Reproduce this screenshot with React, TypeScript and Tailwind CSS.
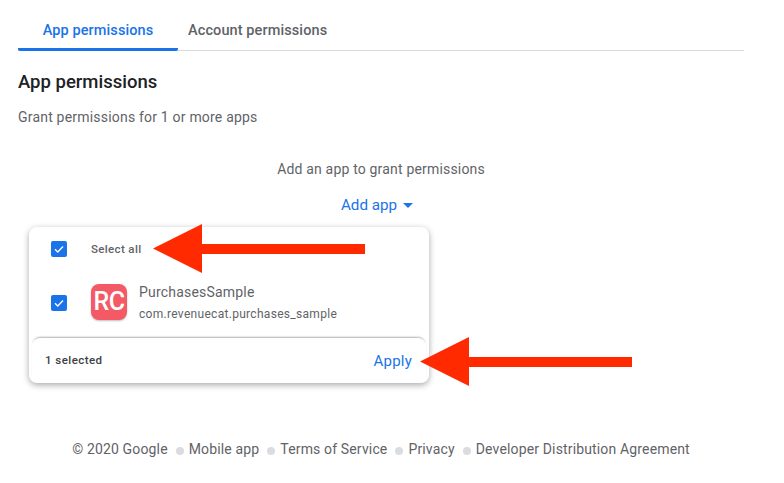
const Box = () => (
  <span className="flex h-4 w-4 items-center justify-center rounded-[2px] bg-[#1a73e8]">
    <svg className="h-3 w-3" viewBox="0 0 24 24" fill="none" stroke="white" strokeWidth="2.6" aria-hidden>
      <path d="M4 12.5l5.5 5.5L20 7" />
    </svg>
  </span>
);

const Arrow = ({ className }: { className: string }) => (
  <svg className={className} width="212" height="49" viewBox="0 0 212 49" aria-hidden>
    <path d="M0 24.5L49 0V20H212V30H49V49Z" fill="#ff2a00" />
  </svg>
);

const Dot = () => <span className="mt-[8px] h-2 w-2 rounded-full bg-[#dadce0]" />;

const App = () => (
  <div className="relative h-[483px] w-[784px] overflow-hidden bg-white font-['Roboto',sans-serif] text-[#5f6368]">
    <div className="pl-[18px] pr-[40px]">
      <div className="flex h-[51px] border-b border-[#dadce0] pt-[21px] text-[14.5px] font-medium tracking-[0.1px]">
        <div className="-mb-px h-[30px] w-[160px] rounded-b-[2px] border-b-[3px] border-[#1a73e8] text-center leading-[20px] text-[#1a73e8]">
          App permissions
        </div>
        <div className="pl-[10px] leading-[20px]">Account permissions</div>
      </div>
      <h2 className="mt-[20px] text-[18.5px] font-medium leading-[22px] text-[#202124]">App permissions</h2>
      <p className="mt-[14px] text-[14px] leading-[20px] tracking-[0.2px]">Grant permissions for 1 or more apps</p>
      <p className="mt-[32px] text-center text-[14px] leading-[20px] tracking-[0.18px]">
        Add an app to grant permissions
      </p>
      <div className="mt-[16px] flex items-center justify-center gap-[6px] pr-[8px] text-[15.2px] leading-[20px] text-[#1a73e8]">
        Add app
        <span className="mt-[1px] h-0 w-0 border-x-[5px] border-t-[5px] border-x-transparent border-t-[#1a73e8]" />
      </div>
      <div className="ml-[11px] mt-[12px] h-[156px] w-[400px] rounded-lg bg-white shadow-[0_2px_6px_rgba(60,64,67,0.45)]">
        <div className="flex h-[44px] items-center pl-[22px]">
          <Box />
          <span className="ml-[24px] pt-[1px] text-[11.5px] font-medium tracking-[0.35px]">Select all</span>
        </div>
        <div className="flex h-[67px] items-center pb-[5px] pl-[22px]">
          <span className="mt-[1px]">
            <Box />
          </span>
          <div className="ml-[24px] flex h-9 w-9 items-center justify-center rounded-lg bg-[#f35a66] text-[25px] font-medium tracking-[-0.5px] text-white shadow-[0_1px_2px_rgba(0,0,0,0.25)]">
            RC
          </div>
          <div className="ml-[12px] pb-[1px]">
            <div className="text-[14px] leading-[20px] tracking-[0.2px]">PurchasesSample</div>
            <div className="mt-[4px] text-[12px] leading-[16px] tracking-[0.3px]">com.revenuecat.purchases_sample</div>
          </div>
        </div>
        <div className="mx-[3px] flex h-[45px] items-center justify-between rounded-t-lg pl-[13px] pr-[14px] pt-[1px] shadow-[0_-2px_2px_-1px_rgba(60,64,67,0.4)]">
          <span className="text-[11.5px] font-medium tracking-[0.45px] text-[#3c4043]">1 selected</span>
          <span className="text-[15px] tracking-[0.2px] text-[#1a73e8]">Apply</span>
        </div>
      </div>
      <div className="mt-[56px] flex justify-center gap-[5px] text-[14px] leading-[20px] tracking-[0.15px]">
        <span className="mr-[3px]">© 2020 Google</span>
        <Dot />
        <span className="mr-[3px]">Mobile app</span>
        <Dot />
        <span className="mr-[3px]">Terms of Service</span>
        <Dot />
        <span className="mr-[3px]">Privacy</span>
        <Dot />
        <span>Developer Distribution Agreement</span>
      </div>
    </div>
    <Arrow className="absolute left-[153px] top-[224px]" />
    <Arrow className="absolute left-[420px] top-[337px]" />
  </div>
);

export default App;
